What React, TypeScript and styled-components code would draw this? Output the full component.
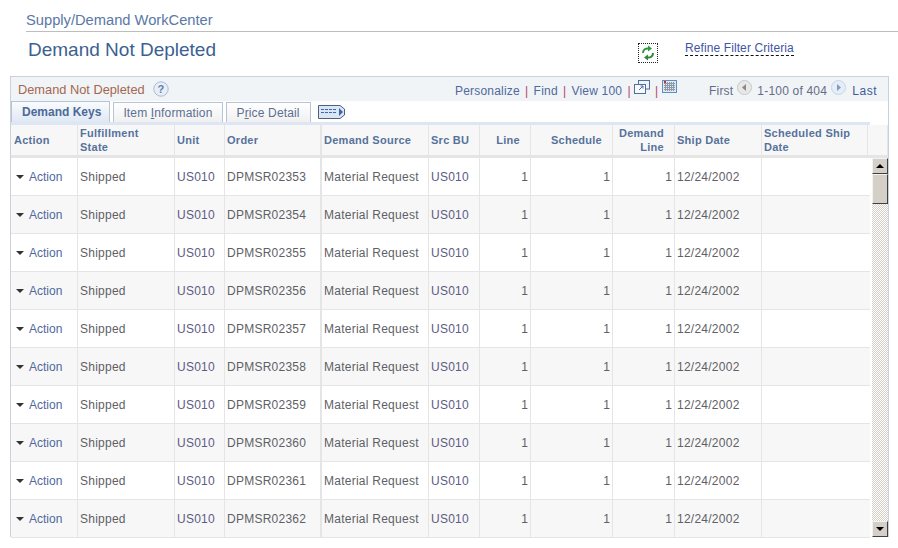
import React, { FC } from 'react';
import styled, { createGlobalStyle } from 'styled-components';

const columns = '67px 97px 50px 97px 107px 51px 51px 82px 62px 87px';

const orders = ['02353', '02354', '02355', '02356', '02357', '02358', '02359', '02360', '02361', '02362'];

const headers = [
    { title: 'Action' },
    { title: 'Fulfillment\nState' },
    { title: 'Unit' },
    { title: 'Order', thick: true },
    { title: 'Demand Source' },
    { title: 'Src BU' },
    { title: 'Line', right: true },
    { title: 'Schedule', right: true },
    { title: 'Demand\nLine', right: true },
    { title: 'Ship Date' },
    { title: 'Scheduled Ship\nDate' },
];

const GlobalStyle = createGlobalStyle`
  html, body {
    margin: 0;
    padding: 0;
    background: #fff;
    font-family: "Liberation Sans", Arial, sans-serif;
    overflow: hidden;
  }
`;

const Page = styled.div`
  width: 898px;
  height: 548px;
  overflow: hidden;
`;

const Breadcrumb = styled.div`
  margin-left: 26px;
  height: 32px;
  box-sizing: border-box;
  padding-top: 12px;
  border-bottom: 1px solid #bdbdbd;
  font-size: 14.7px;
  line-height: 16px;
  color: #5a78a6;
`;

const TitleRow = styled.div`
  display: flex;
  height: 44px;
  padding-left: 28px;
`;

const Title = styled.h1`
  margin: 7px 0 0;
  width: 610px;
  font-size: 19px;
  line-height: 22px;
  font-weight: normal;
  color: #3d5f91;
`;

const RefreshBox = styled.div`
  width: 18px;
  height: 18px;
  margin-top: 11px;
  border: 1px dotted #222;
  display: flex;
  align-items: center;
  justify-content: center;
`;

const RefineLink = styled.a`
  align-self: flex-start;
  margin: 9px 0 0 27px;
  font-size: 12px;
  letter-spacing: 0.1px;
  line-height: 14px;
  color: #3f55a5;
  border-bottom: 1px dashed #111;
`;

const Panel = styled.div`
  margin-left: 10px;
  width: 879px;
  height: 461px;
  box-sizing: border-box;
  border: 1px solid #c9d2da;
  border-bottom: 0;
`;

const PanelHeader = styled.div`
  height: 24px;
  background: #f0f4f6;
  display: flex;
  align-items: center;
  font-size: 12px;
  letter-spacing: 0.2px;
  color: #51689d;
`;

const PanelTitle = styled.span`
  margin-left: 7px;
  width: 135px;
  font-size: 12.8px;
  letter-spacing: 0;
  color: #a5674f;
`;

const HeaderLinks = styled.div`
  margin-left: 286px;
  width: 254px;
  display: flex;
  align-items: center;
  padding-top: 3px;
`;

const Sep = styled.span`
  margin: 0 5.2px;
  color: #b5446e;
`;

const IconSlot = styled.span`
  display: inline-flex;
  margin: -8px 0 0 -2px;
`;

const Pager = styled.div`
  display: flex;
  align-items: center;
  padding-top: 3px;
  color: #666c88;
`;

const PagerLast = styled.span`
  margin-left: 1px;
  letter-spacing: 0.6px;
  color: #3d5a96;
`;

const PagerIcon = styled.span`
  display: inline-flex;
  margin: -6px 5px 0 4px;
`;

const Tabs = styled.div`
  height: 21px;
  display: flex;
  align-items: flex-end;
  width: 859px;
  border-bottom: 3px solid #dde6f2;
`;

const Tab = styled.div<{ $active?: boolean }>`
  height: ${({ $active }) => ($active ? '21px' : '20px')};
  box-sizing: border-box;
  margin-right: 3px;
  border: 1px solid #b6c4d6;
  border-bottom: 0;
  background: ${({ $active }) => ($active ? 'linear-gradient(#fafbfd, #dfe8f4)' : 'linear-gradient(#fff, #f0f0f0)')};
  padding: ${({ $active }) => ($active ? '3px 8px 0 10px' : '3px 10px 0 9px')};
  font-size: 12px;
  letter-spacing: ${({ $active }) => ($active ? '0' : '0.15px')};
  line-height: 15px;
  font-weight: ${({ $active }) => ($active ? 'bold' : 'normal')};
  color: ${({ $active }) => ($active ? '#4b6a99' : '#5c6f94')};
`;

const ShowAll = styled.span`
  display: inline-flex;
  margin: 0 0 3px 4px;
`;

const Grid = styled.div`
  display: grid;
  grid-template-columns: ${columns} 106px 1fr;
`;

const HeadCell = styled.div<{ $right?: boolean; $thick?: boolean }>`
  height: 33px;
  box-sizing: border-box;
  background: #f7f7f7;
  border-right: ${({ $thick }) => ($thick ? '2px' : '1px')} solid #e5e5e5;
  border-bottom: 3px solid #e5e5e5;
  padding: 0 ${({ $right }) => ($right ? '10px' : '2px')} 0 2px;
  display: flex;
  align-items: center;
  justify-content: ${({ $right }) => ($right ? 'flex-end' : 'flex-start')};
  text-align: ${({ $right }) => ($right ? 'right' : 'left')};
  white-space: pre-line;
  font-size: 11px;
  letter-spacing: 0.27px;
  line-height: 14px;
  font-weight: bold;
  color: #56729c;

  &:first-child {
    padding-left: 3px;
  }
`;

const Body = styled.div`
  display: flex;
`;

const Rows = styled.div`
  width: 859px;
  display: grid;
  grid-template-columns: ${columns} 1fr;
`;

const Cell = styled.div<{ $odd: boolean; $right?: boolean; $thick?: boolean }>`
  height: 38px;
  box-sizing: border-box;
  background: ${({ $odd }) => ($odd ? '#f7f7f7' : '#fff')};
  border-right: ${({ $thick }) => ($thick ? '2px' : '1px')} solid #e5e5e5;
  border-bottom: 1px solid #e5e5e5;
  padding: 0 2px;
  display: flex;
  align-items: center;
  justify-content: ${({ $right }) => ($right ? 'flex-end' : 'flex-start')};
  font-size: 12px;
  letter-spacing: ${({ $right }) => ($right ? '0' : '0.25px')};
  color: #5f5f66;
`;

const LastCell = styled(Cell)`
  border-right: 0;
`;

const ActionLink = styled.span`
  margin-left: 5px;
  letter-spacing: 0;
  color: #51689d;
`;

const UnitText = styled.span`
  color: #5d5a84;
`;

const Scrollbar = styled.div`
  width: 16px;
  margin-left: 2px;
  height: 379px;
  display: flex;
  flex-direction: column;
  background: repeating-conic-gradient(#d4d0c8 0 25%, #fff 0 50%) 0 0 / 2px 2px;
`;

const ScrollButton = styled.div`
  height: 16px;
  box-sizing: border-box;
  background: #d4d0c8;
  border: 1px solid;
  border-color: #f4f2ee #404040 #404040 #f4f2ee;
  display: flex;
  align-items: center;
  justify-content: center;
  flex: none;
`;

const ScrollThumb = styled(ScrollButton)`
  height: 30px;
`;

const ScrollTrack = styled.div`
  flex: 1;
`;

const Arrow = styled.span<{ $up?: boolean }>`
  width: 0;
  height: 0;
  border-left: 4px solid transparent;
  border-right: 4px solid transparent;
  ${({ $up }) => ($up ? 'border-bottom: 4px solid #000;' : 'border-top: 4px solid #000;')}
`;

const DropArrow = styled.span`
  width: 0;
  height: 0;
  margin-left: 3px;
  border-left: 4px solid transparent;
  border-right: 4px solid transparent;
  border-top: 4px solid #333;
`;

const RefreshIcon = () => (
    <svg width="14" height="16" viewBox="0 0 14 16" fill="none">
        <path d="M2 8 C2 4.5 4.5 3 8 3.5" stroke="#2f9a3c" strokeWidth="2" />
        <path d="M7 0.5 L11 3.5 L7 6.5 Z" fill="#2f9a3c" />
        <path d="M12 8 C12 11.5 9.5 13 6 12.5" stroke="#2a8a35" strokeWidth="2" />
        <path d="M7 9.5 L3 12.5 L7 15.5 Z" fill="#2a8a35" />
    </svg>
);

const HelpIcon = () => (
    <svg width="16" height="16" viewBox="0 0 16 16">
        <circle cx="8" cy="8" r="7.2" fill="#e8eef5" stroke="#a9bdd6" />
        <text x="8" y="12" textAnchor="middle" fontSize="11" fontWeight="bold" fontFamily="Liberation Sans" fill="#5f80b0">?</text>
    </svg>
);

const NewWindowIcon = () => (
    <svg width="16" height="14" viewBox="0 0 16 14" fill="none" stroke="#4f6f9f">
        <rect x="4.5" y="0.5" width="11" height="8.5" fill="#eef3f8" />
        <rect x="0.5" y="4.5" width="11" height="9" fill="#f7f9fb" />
        <path d="M5 10 L9 6 M6.5 6 H9 V8.5" />
    </svg>
);

const CalendarIcon = () => (
    <svg width="15" height="13" viewBox="0 0 15 13">
        <rect x="0.5" y="0.5" width="14" height="12" fill="#dfe7f0" stroke="#5f8fc0" />
        <path d="M2 3.5 H13 M2 5.5 H13 M2 7.5 H13 M2 9.5 H13 M3.5 2 V11 M5.5 2 V11 M7.5 2 V11 M9.5 2 V11 M11.5 2 V11" stroke="#8f9aa8" strokeWidth="1" />
        <rect x="2" y="1" width="2" height="2" fill="#e2231a" />
    </svg>
);

const RoundIcon: FC<{ next?: boolean }> = ({ next }) => (
    <svg width="15" height="15" viewBox="0 0 15 15">
        <circle cx="7.5" cy="7.5" r="7" fill={next ? '#e6edf6' : '#e8e8e8'} stroke={next ? '#c6d4e6' : '#c8c8c8'} />
        <path d={next ? 'M6 4 L10 7.5 L6 11 Z' : 'M9 4 L5 7.5 L9 11 Z'} fill={next ? '#7d9cc6' : '#8a8a8a'} />
    </svg>
);

const ShowAllIcon = () => (
    <svg width="27" height="14" viewBox="0 0 27 14">
        <path d="M0.5 0.5 H22 L26.5 4 V10 L22 13.5 H0.5 Z" fill="#dbe6f5" stroke="#4f5f7f" />
        <path d="M3 4.5 H18 M3 7.5 H18" stroke="#3f66a8" strokeWidth="1" strokeDasharray="3 1" />
        <path d="M21 3 L25 7 L21 11 Z" fill="#3f66a8" />
    </svg>
);

export default function App() {
    return (
        <Page>
            <GlobalStyle />
            <Breadcrumb>Supply/Demand WorkCenter</Breadcrumb>
            <TitleRow>
                <Title>Demand Not Depleted</Title>
                <RefreshBox><RefreshIcon /></RefreshBox>
                <RefineLink>Refine Filter Criteria</RefineLink>
            </TitleRow>
            <Panel>
                <PanelHeader>
                    <PanelTitle>Demand Not Depleted</PanelTitle>
                    <HelpIcon />
                    <HeaderLinks>
                        Personalize<Sep>|</Sep>Find<Sep>|</Sep>View 100<Sep>|</Sep>
                        <IconSlot><NewWindowIcon /></IconSlot><Sep>|</Sep>
                        <IconSlot><CalendarIcon /></IconSlot>
                    </HeaderLinks>
                    <Pager>
                        First
                        <PagerIcon><RoundIcon /></PagerIcon>
                        1-100 of 404
                        <PagerIcon><RoundIcon next /></PagerIcon>
                        <PagerLast>Last</PagerLast>
                    </Pager>
                </PanelHeader>
                <Tabs>
                    <Tab $active>Demand Keys</Tab>
                    <Tab>Item <u>I</u>nformation</Tab>
                    <Tab>P<u>r</u>ice Detail</Tab>
                    <ShowAll><ShowAllIcon /></ShowAll>
                </Tabs>
                <Grid>
                    {headers.map(({ title, right, thick }) => (
                        <HeadCell key={title} $right={right} $thick={thick}>{title}</HeadCell>
                    ))}
                    <HeadCell />
                </Grid>
                <Body>
                    <Rows>
                        {orders.map((order, i) => {
                            const odd = i % 2 === 1;
                            return (
                                <React.Fragment key={order}>
                                    <Cell $odd={odd}>
                                        <DropArrow /><ActionLink>Action</ActionLink>
                                    </Cell>
                                    <Cell $odd={odd}>Shipped</Cell>
                                    <Cell $odd={odd}><UnitText>US010</UnitText></Cell>
                                    <Cell $odd={odd} $thick>DPMSR{order}</Cell>
                                    <Cell $odd={odd}>Material Request</Cell>
                                    <Cell $odd={odd}><UnitText>US010</UnitText></Cell>
                                    <Cell $odd={odd} $right>1</Cell>
                                    <Cell $odd={odd} $right>1</Cell>
                                    <Cell $odd={odd} $right>1</Cell>
                                    <Cell $odd={odd}>12/24/2002</Cell>
                                    <LastCell $odd={odd} />
                                </React.Fragment>
                            );
                        })}
                    </Rows>
                    <Scrollbar>
                        <ScrollButton><Arrow $up /></ScrollButton>
                        <ScrollThumb />
                        <ScrollTrack />
                        <ScrollButton><Arrow /></ScrollButton>
                    </Scrollbar>
                </Body>
            </Panel>
        </Page>
    );
}
